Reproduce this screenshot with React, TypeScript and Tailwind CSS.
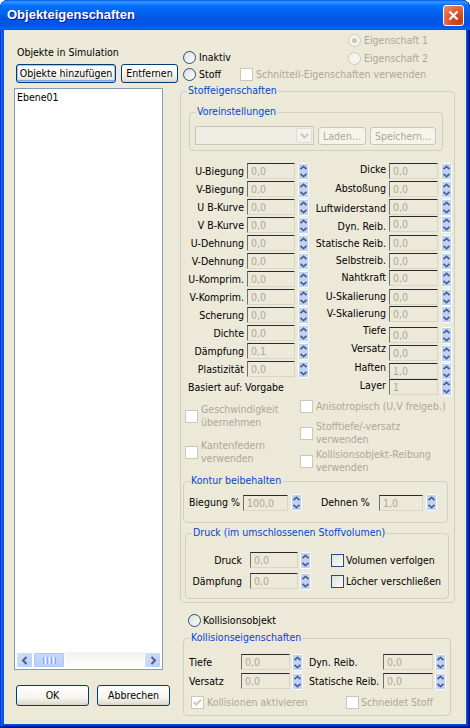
import React from "react";

const Spin = () => (
  <svg width="11" height="17" viewBox="0 0 11 17" className="block shrink-0">
    <rect x="0.5" y="0.5" width="10" height="16" rx="1" fill="#C1D2F8" stroke="#FFFFFF" />
    <path d="M2.5 6.2L5.5 3.4L8.5 6.2" fill="none" stroke="#4D6185" strokeWidth="1.8" />
    <path d="M2.5 10.8L5.5 13.6L8.5 10.8" fill="none" stroke="#4D6185" strokeWidth="1.8" />
  </svg>
);

const Field = ({ v, className }: { v: string; className: string }) => (
  <div
    className={
      "h-[16px] shrink-0 border border-t-[#2a2a2a] border-l-[#707070] border-r-[#d9d6c8] border-b-[#d9d6c8] bg-[#ECE9D8] text-[#ACA899] pl-[3px] leading-[14px] " +
      className
    }
  >
    {v}
  </div>
);

const Radio = ({ disabled, checked }: { disabled?: boolean; checked?: boolean }) => (
  <svg width="13" height="13" viewBox="0 0 13 13" className="block shrink-0">
    <circle cx="6.5" cy="6.5" r="6" fill={disabled ? "#F5F4EA" : "url(#xpfill)"} stroke={disabled ? "#CAC8BB" : "#1C5180"} />
    {checked && <circle cx="6.5" cy="6.5" r="2.6" fill={disabled ? "#CAC8BB" : "#21A121"} />}
  </svg>
);

const Check = ({ disabled, checked }: { disabled?: boolean; checked?: boolean }) => (
  <svg width="13" height="13" viewBox="0 0 13 13" className="block shrink-0">
    <rect x="0.5" y="0.5" width="12" height="12" fill={disabled ? "#FFFFFF" : "url(#xpfill)"} stroke={disabled ? "#CAC8BB" : "#1C5180"} />
    {checked && <path d="M3 6.2L5.3 8.6L10 3.8" fill="none" stroke={disabled ? "#CAC8BB" : "#21A121"} strokeWidth="2" />}
  </svg>
);

const Group = ({ label, className, children }: { label: string; className: string; children?: React.ReactNode }) => (
  <div className={"relative shrink-0 border border-[#D0D0BF] rounded-[4px] flex flex-col " + className}>
    <span className="absolute top-[-8px] left-[6px] px-[1px] bg-[#ECE9D8] text-[#0046D5] leading-[13px] whitespace-nowrap">
      {label}
    </span>
    {children}
  </div>
);

const XPButton = ({ children, className, focus }: { children: React.ReactNode; className: string; focus?: boolean }) => (
  <div
    className={
      "shrink-0 flex items-center justify-center border border-[#003C74] rounded-[3px] bg-[linear-gradient(180deg,#FFFFFF_0%,#F6F5F0_60%,#E3E0D6_90%,#D6D0C5_100%)] text-black whitespace-nowrap " +
      (focus ? "shadow-[inset_0_0_0_1px_#A8C4F0,inset_0_-1px_0_1px_#7FA5E4] " : "") +
      className
    }
  >
    {children}
  </div>
);

const DisButton = ({ children, className }: { children: React.ReactNode; className: string }) => (
  <div
    className={
      "shrink-0 flex items-center justify-center border border-[#C9C7BA] rounded-[3px] bg-[#F5F4EA] text-[#ACA899] whitespace-nowrap " +
      className
    }
  >
    {children}
  </div>
);

const leftRows: [string, string][] = [
  ["U-Biegung", "0,0"],
  ["V-Biegung", "0,0"],
  ["U B-Kurve", "0,0"],
  ["V B-Kurve", "0,0"],
  ["U-Dehnung", "0,0"],
  ["V-Dehnung", "0,0"],
  ["U-Komprim.", "0,0"],
  ["V-Komprim.", "0,0"],
  ["Scherung", "0,0"],
  ["Dichte", "0,0"],
  ["Dämpfung", "0,1"],
  ["Plastizität", "0,0"],
];

const rightRows: [string, string, string, string][] = [
  ["Dicke", "0,0", "h-[18px]", "mt-[0px]"],
  ["Abstoßung", "0,0", "h-[18px]", "mt-[1px]"],
  ["Luftwiderstand", "0,0", "h-[17px]", "mt-[3px]"],
  ["Dyn. Reib.", "0,0", "h-[19px]", "mt-[4px]"],
  ["Statische Reib.", "0,0", "h-[18px]", "mt-[2px]"],
  ["Selbstreib.", "0,0", "h-[17px]", "mt-[1px]"],
  ["Nahtkraft", "0,0", "h-[19px]", "mt-[1px]"],
  ["U-Skalierung", "0,0", "h-[17px]", "mt-[1px]"],
  ["V-Skalierung", "0,0", "h-[21px]", "mt-[1px]"],
  ["Tiefe", "0,0", "h-[18px]", "mt-[-3px]"],
  ["Versatz", "0,0", "h-[18px]", "mt-[-3px]"],
  ["Haften", "1,0", "h-[16px]", "mt-[-2px]"],
  ["Layer", "1", "h-[16px]", "mt-[0px]"],
];

const ScrollArrow = ({ dir }: { dir: "l" | "r" }) => (
  <div className="w-[17px] h-[16px] shrink-0 rounded-[2px] border border-[#FFFFFF] bg-[linear-gradient(135deg,#D4E0FC_0%,#B8CCF7_100%)] flex items-center justify-center">
    <svg width="8" height="9" viewBox="0 0 8 9">
      {dir === "l" ? (
        <path d="M5.5 1L2 4.5L5.5 8" fill="none" stroke="#4D6185" strokeWidth="2" />
      ) : (
        <path d="M2.5 1L6 4.5L2.5 8" fill="none" stroke="#4D6185" strokeWidth="2" />
      )}
    </svg>
  </div>
);

export default function App() {
  return (
    <div className="w-[470px] h-[728px] flex flex-col bg-[#0855DD] rounded-t-[8px] overflow-hidden shadow-[inset_-1px_-1px_#00138c,inset_1px_1px_#0831d9,inset_-2px_-2px_#001ea0,inset_2px_2px_#166aee,inset_-3px_-3px_#003bda,inset_3px_3px_#0855dd] font-['DejaVu_Sans_Condensed','DejaVu_Sans',sans-serif] text-[10.5px] leading-[13px] text-black select-none">
      <svg width="0" height="0" className="absolute">
        <defs>
          <linearGradient id="xpfill" x1="0" y1="0" x2="1" y2="1">
            <stop offset="0" stopColor="#DCDCD7" />
            <stop offset="1" stopColor="#FFFFFF" />
          </linearGradient>
        </defs>
      </svg>

      {/* Title bar */}
      <div className="h-[30px] shrink-0 flex items-center justify-between pl-[7px] pr-[6px] rounded-t-[8px] bg-[linear-gradient(180deg,#0058EE_0%,#3593FF_6%,#288EFF_10%,#127DFF_14%,#036FFC_20%,#0262EE_44%,#0057E5_60%,#0054E3_76%,#0055EB_86%,#005BF5_92%,#026AFE_94%,#0062EF_96%,#0052D6_100%)]">
        <span className="font-['Liberation_Sans',sans-serif] font-bold text-[13px] text-white leading-[16px] [text-shadow:1px_1px_#0F1089]">
          Objekteigenschaften
        </span>
        <div className="w-[21px] h-[21px] rounded-[3px] border border-white bg-[radial-gradient(circle_at_80%_80%,#C43C10_0%,#E0532B_45%,#EC8A66_95%)] flex items-center justify-center">
          <svg width="11" height="11" viewBox="0 0 11 11">
            <path d="M1.5 1.5L9.5 9.5M9.5 1.5L1.5 9.5" stroke="#FFFFFF" strokeWidth="2.2" />
          </svg>
        </div>
      </div>

      {/* Body */}
      <div className="flex-1 mx-[4px] mb-[4px] bg-[#ECE9D8] flex">
        {/* Left column */}
        <div className="w-[175px] shrink-0 flex flex-col pl-[10px]">
          <div className="ml-[3px] mt-[16px] h-[13px] whitespace-nowrap">Objekte in Simulation</div>
          <div className="mt-[5px] ml-[2px] flex gap-[5px]">
            <XPButton className="w-[100px] h-[19px]" focus>
              Objekte hinzufügen
            </XPButton>
            <XPButton className="w-[57px] h-[19px]">Entfernen</XPButton>
          </div>
          <div className="mt-[5px] w-[149px] h-[582px] border border-[#7F9DB9] bg-white flex flex-col">
            <div className="flex-1 pl-[2px] pt-[2px]">Ebene01</div>
            <div className="h-[16px] mb-[1px] mx-[1px] flex bg-[linear-gradient(180deg,#F3F1EC_0%,#FEFEFB_100%)]">
              <ScrollArrow dir="l" />
              <div className="w-[32px] h-[16px] rounded-[2px] border border-[#FFFFFF] bg-[linear-gradient(180deg,#CAD9FC_0%,#B9CEF9_100%)] flex items-center justify-center gap-[1px] shadow-[inset_0_0_0_1px_#B0C6F4]">
                <div className="w-[1px] h-[7px] bg-[#8CA8E8]" />
                <div className="w-[1px] h-[7px] bg-[#EEF4FE]" />
                <div className="w-[1px] h-[7px] bg-[#8CA8E8]" />
                <div className="w-[1px] h-[7px] bg-[#EEF4FE]" />
                <div className="w-[1px] h-[7px] bg-[#8CA8E8]" />
                <div className="w-[1px] h-[7px] bg-[#EEF4FE]" />
                <div className="w-[1px] h-[7px] bg-[#8CA8E8]" />
              </div>
              <div className="flex-1" />
              <ScrollArrow dir="r" />
            </div>
          </div>
          <div className="mt-[15px] ml-[2px] flex gap-[8px]">
            <XPButton className="w-[73px] h-[21px]">OK</XPButton>
            <XPButton className="w-[73px] h-[21px]">Abbrechen</XPButton>
          </div>
        </div>

        {/* Right column */}
        <div className="flex-1 flex flex-col">
          <div className="mt-[4px] h-[13px] pl-[169px] flex items-center gap-[3px] text-[#ACA899]">
            <Radio disabled checked />
            <span className="whitespace-nowrap">Eigenschaft 1</span>
          </div>
          <div className="mt-[4px] h-[13px] pl-[4px] flex items-center">
            <div className="w-[165px] flex items-center gap-[3px]">
              <Radio />
              <span>Inaktiv</span>
            </div>
            <div className="flex items-center gap-[3px] text-[#ACA899] mt-[2px]">
              <Radio disabled />
              <span className="whitespace-nowrap">Eigenschaft 2</span>
            </div>
          </div>
          <div className="mt-[4px] h-[13px] pl-[4px] flex items-center">
            <div className="w-[57px] flex items-center gap-[3px]">
              <Radio />
              <span>Stoff</span>
            </div>
            <div className="flex items-center gap-[3px] text-[#ACA899]">
              <Check disabled />
              <span className="whitespace-nowrap">Schnitteil-Eigenschaften verwenden</span>
            </div>
          </div>

          {/* Stoffeigenschaften */}
          <Group label="Stoffeigenschaften" className="mt-[10px] ml-[1px] w-[275px] h-[512px]">
            <Group label="Voreinstellungen" className="mt-[20px] ml-[8px] w-[254px] h-[39px]">
              <div className="mt-[13px] ml-[5px] flex items-start">
                <div className="w-[119px] h-[19px] border border-[#C9C7BA] bg-[#EFEDE3] flex justify-end p-[1px]">
                  <div className="w-[16px] h-full border border-[#E0DED2] bg-[#F3F2EC] rounded-[1px] flex items-center justify-center">
                    <svg width="9" height="6" viewBox="0 0 9 6">
                      <path d="M1 1L4.5 4.5L8 1" fill="none" stroke="#C9C7BA" strokeWidth="1.8" />
                    </svg>
                  </div>
                </div>
                <DisButton className="ml-[4px] mt-[1px] w-[48px] h-[18px]">Laden...</DisButton>
                <DisButton className="ml-[4px] mt-[1px] w-[66px] h-[18px]">Speichern...</DisButton>
              </div>
            </Group>

            {/* fields */}
            <div className="mt-[12px] flex items-start">
              <div className="ml-[4px] flex flex-col">
                {leftRows.map(([l, v]) => (
                  <div key={l} className="h-[18px] flex items-start">
                    <div className="w-[59px] text-right whitespace-nowrap mt-[2px]">{l}</div>
                    <Field v={v} className="ml-[3px] w-[48px]" />
                    <div className="ml-[3px]">
                      <Spin />
                    </div>
                  </div>
                ))}
                <div className="mt-[2px] ml-[3px] h-[13px] whitespace-nowrap">Basiert auf: Vorgabe</div>
              </div>
              <div className="ml-[3px] flex flex-col">
                {rightRows.map(([l, v, rc, lc]) => (
                  <div key={l} className={"flex items-start " + rc}>
                    <div className={"w-[74px] text-right whitespace-nowrap " + lc}>{l}</div>
                    <Field v={v} className="ml-[3px] w-[49px]" />
                    <div className="ml-[3px]">
                      <Spin />
                    </div>
                  </div>
                ))}
              </div>
            </div>

            {/* checkboxes */}
            <div className="flex items-start text-[#ACA899]">
              <div className="ml-[4px] w-[115px] flex flex-col">
                <div className="mt-[8px] h-[26px] flex items-center gap-[3px]">
                  <Check disabled />
                  <div>
                    Geschwindigkeit
                    <br />
                    übernehmen
                  </div>
                </div>
                <div className="mt-[10px] h-[26px] flex items-center gap-[3px]">
                  <Check disabled />
                  <div>
                    Kantenfedern
                    <br />
                    verwenden
                  </div>
                </div>
              </div>
              <div className="flex flex-col">
                <div className="mt-[5px] h-[13px] flex items-center gap-[3px]">
                  <Check disabled />
                  <div className="whitespace-nowrap">Anisotropisch (U,V freigeb.)</div>
                </div>
                <div className="mt-[7px] h-[26px] flex items-center gap-[3px]">
                  <Check disabled />
                  <div>
                    Stofftiefe/-versatz
                    <br />
                    verwenden
                  </div>
                </div>
                <div className="mt-[2px] h-[26px] flex items-center gap-[3px]">
                  <Check disabled />
                  <div className="whitespace-nowrap">
                    Kollisionsobjekt-Reibung
                    <br />
                    verwenden
                  </div>
                </div>
              </div>
            </div>

            {/* Kontur */}
            <Group label="Kontur beibehalten" className="mt-[7px] ml-[2px] w-[265px] h-[42px]">
              <div className="mt-[12px] ml-[5px] flex items-center">
                <div className="w-[54px] whitespace-nowrap">Biegung %</div>
                <Field v="100,0" className="w-[45px]" />
                <div className="ml-[3px]">
                  <Spin />
                </div>
                <div className="ml-[19px] w-[58px] whitespace-nowrap">Dehnen %</div>
                <Field v="1,0" className="w-[44px]" />
                <div className="ml-[3px]">
                  <Spin />
                </div>
              </div>
            </Group>

            {/* Druck */}
            <Group label="Druck (im umschlossenen Stoffvolumen)" className="mt-[10px] ml-[4px] w-[264px] h-[66px]">
              <div className="mt-[18px] flex items-center h-[16px]">
                <div className="w-[56px] text-right">Druck</div>
                <Field v="0,0" className="ml-[8px] w-[48px]" />
                <div className="ml-[2px]">
                  <Spin />
                </div>
                <div className="ml-[20px] flex items-center gap-[2px]">
                  <Check />
                  <span className="whitespace-nowrap">Volumen verfolgen</span>
                </div>
              </div>
              <div className="mt-[5px] flex items-center h-[16px]">
                <div className="w-[56px] text-right">Dämpfung</div>
                <Field v="0,0" className="ml-[8px] w-[48px]" />
                <div className="ml-[2px]">
                  <Spin />
                </div>
                <div className="ml-[20px] flex items-center gap-[2px]">
                  <Check />
                  <span className="whitespace-nowrap">Löcher verschließen</span>
                </div>
              </div>
            </Group>
          </Group>

          {/* Kollisionsobjekt */}
          <div className="mt-[11px] ml-[9px] h-[13px] flex items-center gap-[2px]">
            <Radio />
            <span>Kollisionsobjekt</span>
          </div>

          <Group label="Kollisionseigenschaften" className="mt-[11px] ml-[4px] w-[268px] h-[78px]">
            <div className="mt-[15px] ml-[5px] flex items-center h-[16px]">
              <div className="w-[52px]">Tiefe</div>
              <Field v="0,0" className="w-[49px]" />
              <div className="ml-[2px]">
                <Spin />
              </div>
              <div className="ml-[6px] w-[74px] whitespace-nowrap">Dyn. Reib.</div>
              <Field v="0,0" className="w-[50px]" />
              <div className="ml-[2px]">
                <Spin />
              </div>
            </div>
            <div className="mt-[3px] ml-[5px] flex items-center h-[16px]">
              <div className="w-[52px]">Versatz</div>
              <Field v="0,0" className="w-[49px]" />
              <div className="ml-[2px]">
                <Spin />
              </div>
              <div className="ml-[6px] w-[74px] whitespace-nowrap">Statische Reib.</div>
              <Field v="0,0" className="w-[50px]" />
              <div className="ml-[2px]">
                <Spin />
              </div>
            </div>
            <div className="mt-[7px] ml-[7px] flex items-center text-[#ACA899]">
              <div className="w-[155px] flex items-center gap-[3px]">
                <Check disabled checked />
                <span className="whitespace-nowrap">Kollisionen aktivieren</span>
              </div>
              <div className="flex items-center gap-[2px]">
                <Check disabled />
                <span className="whitespace-nowrap">Schneidet Stoff</span>
              </div>
            </div>
          </Group>
        </div>
      </div>
    </div>
  );
}
